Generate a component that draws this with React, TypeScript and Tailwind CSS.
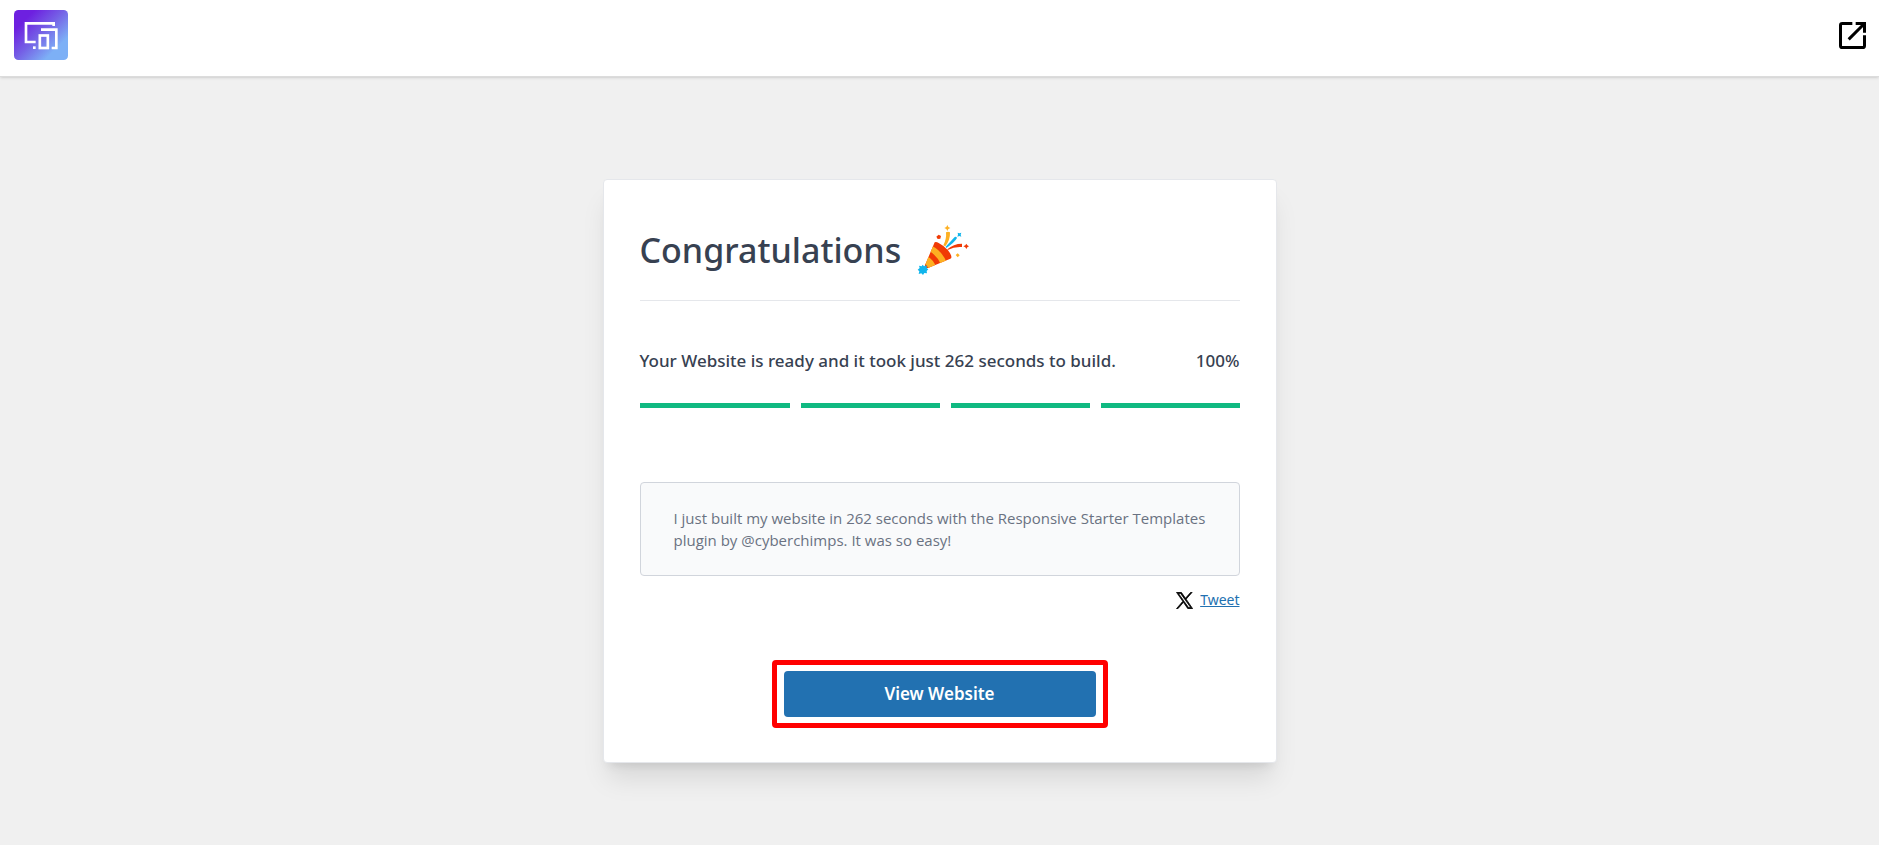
import React from "react";

function BrandLogo() {
  return (
    <svg viewBox="0 0 162 150" className="h-[50px] w-[54px]" aria-hidden="true">
      <defs>
        <linearGradient id="brand" x1="0.15" y1="0.1" x2="0.9" y2="0.8">
          <stop offset="0.1" stopColor="#6d20e0" />
          <stop offset="0.5" stopColor="#7562e6" />
          <stop offset="0.9" stopColor="#7db0f6" />
        </linearGradient>
      </defs>
      <rect width="162" height="150" rx="13" fill="url(#brand)" />
      <g fill="none" stroke="#fff" strokeWidth="8">
        <path d="M119 48V40H36V96H65" />
        <path d="M81 59H127V114H113" />
        <rect x="77.500" y="76.500" width="24" height="37.500" />
      </g>
      <rect x="57" y="109" width="8" height="8" fill="#fff" />
    </svg>
  );
}

function ExternalIcon() {
  return (
    <svg viewBox="0 0 81 81" className="size-[27px]" fill="none" stroke="#000" strokeWidth="9" aria-hidden="true">
      <path d="M40 4.500H10Q4.500 4.500 4.500 10V71Q4.500 76.500 10 76.500H71Q76.500 76.500 76.500 71V40" />
      <path d="M50 4.500H76.500V32M75 6L29 52" />
    </svg>
  );
}

function PartyPopper() {
  return (
    <svg viewBox="45 30 156 153" className="h-[51px] w-[52px]" role="img" aria-label="Party popper">
      <defs>
        <clipPath id="cone">
          <path d="M98 82Q103 80 110 84Q126 92 138 106Q148 119 149 126Q149 129 145 131L80 158Q72 161 68 153Z" />
        </clipPath>
      </defs>
      <g clipPath="url(#cone)">
        <rect x="60" y="75" width="95" height="90" fill="#f03a05" />
        <path d="M91 93Q119 108 133 140L116 147Q105 122 82 108Z" fill="#fdb022" />
        <path d="M76 124Q94 134 102 156L78 166Q76 152 60 146Z" fill="#fdb022" />
        <path d="M66 145Q76 150 80 162L60 168Z" fill="#f03a05" />
      </g>
      <path d="M132 52Q138 49 144 52Q145 75 130 94L124 91Q134 72 132 52Z" fill="#fdb022" />
      <path d="M131 95L158 66Q163 64 165 69Q158 82 133 99Z" fill="#10b5ec" />
      <path d="M136 103Q154 86 180 86V96Q158 94 137 105Z" fill="#f03a05" />
      <path d="M136 30L139 36L145 39L139 42L136 48L133 42L127 39L133 36Z" fill="#fdb022" />
      <path d="M193 86L196 91L201 94L196 97L193 102L190 97L184 94L190 91Z" fill="#f03a05" />
      <path d="M167 53L172 55L178 53L176 59L178 65L172 63L166 65L168 59Z" fill="#10b5ec" />
      <path d="M110 59L117 63L115 71L107 72L103 65Z" fill="#f03a05" />
      <path d="M161 120L167 115L173 121L167 127Z" fill="#fdb022" />
      <path d="M62 149L66 154L74 151L74 159L79 163L74 168L75 175L67 174L63 180L58 175L50 177L52 169L47 164L53 159L51 152L59 154Z" fill="#10b5ec" />
    </svg>
  );
}

function XLogo() {
  return (
    <svg viewBox="0 0 24 24" className="size-[17px]" aria-hidden="true">
      <path d="M14.300 10.100 22.800 0.500H20.800L13.400 8.800 7.500 0.500H0.700L9.600 13.200 0.700 23.500H2.700L10.500 14.600 16.700 23.500H23.500ZM11.500 13.300 10.600 12 3.400 2H6.500L12.300 10.100 13.200 11.400 20.800 22H17.700Z" fill="#000" stroke="#000" strokeWidth="1.100" />
    </svg>
  );
}

export default function App() {
  return (
    <div className="flex min-h-screen flex-col bg-[#f0f0f0] font-['Noto_Sans','Open_Sans',sans-serif] text-[#374151]">
      <header className="flex items-center justify-between border-b border-[#dcdcdc] bg-white pt-2.5 pr-[13px] pb-4 pl-3.5 shadow-sm">
        <a href="#home" aria-label="Home">
          <BrandLogo />
        </a>
        <a href="#site" aria-label="Open site">
          <ExternalIcon />
        </a>
      </header>

      <main className="flex justify-center px-4 pt-[102px] pb-20">
        <section className="w-full max-w-[674px] rounded border border-gray-200 bg-white px-9 pt-10 pb-[34px] shadow-xl">
          <div className="flex items-center gap-4 border-b border-gray-200 pb-5">
            <h1 className="text-[34px] leading-[60px] font-medium">Congratulations</h1>
            <PartyPopper />
          </div>

          <div className="mt-12 flex items-center justify-between text-[17px] leading-6 font-medium">
            <p>Your Website is ready and it took just 262 seconds to build.</p>
            <p>100%</p>
          </div>

          <div className="mt-[30px] flex gap-[11px]" role="progressbar" aria-label="Build progress" aria-valuenow={100}>
            <div className="h-[5px] w-[150px] bg-[#10b981]" />
            <div className="h-[5px] flex-1 bg-[#10b981]" />
            <div className="h-[5px] flex-1 bg-[#10b981]" />
            <div className="h-[5px] flex-1 bg-[#10b981]" />
          </div>

          <p className="mt-[74px] rounded border border-gray-300 bg-gray-50 px-[33px] py-6 font-['Open_Sans','Noto_Sans',sans-serif] text-[15px] leading-[22px] text-gray-500">
            I just built my website in 262 seconds with the Responsive Starter Templates plugin by @cyberchimps. It was so
            easy!
          </p>

          <a href="#tweet" className="mt-3 ml-auto flex w-fit items-center gap-[7px] text-sm leading-6 text-[#2271b1]">
            <XLogo />
            <span className="underline">Tweet</span>
          </a>

          <div className="mx-auto mt-12 w-fit rounded border-[5px] border-[#ff0000] px-[7px] py-1.5">
            <button type="button" className="block h-[46px] w-[312px] rounded bg-[#2271b1] text-[17px] font-semibold text-white">
              View Website
            </button>
          </div>
        </section>
      </main>
    </div>
  );
}
